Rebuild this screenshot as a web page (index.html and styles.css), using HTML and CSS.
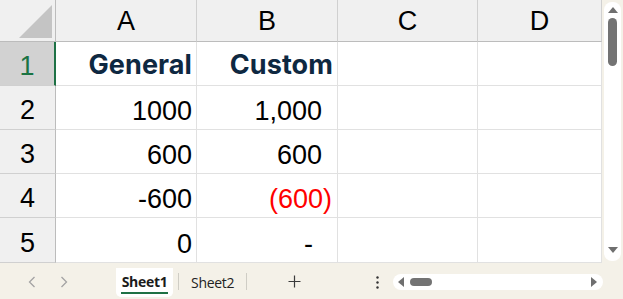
FILE: index.html
```html
<!DOCTYPE html>
<html>
<head>
  <title>Book1</title>
  <meta charset="utf-8"/>
  <link rel="stylesheet" href="styles.css">
</head>
<body>
  <div class="app">
    <div class="main">
      <div class="sheet">
        <div class="corner"><div class="corner-tri"></div></div>
        <div class="colhead">A</div>
        <div class="colhead">B</div>
        <div class="colhead">C</div>
        <div class="colhead">D</div>

        <div class="rowhead active">1</div>
        <div class="cell first title">General</div>
        <div class="cell title">Custom</div>
        <div class="cell"></div>
        <div class="cell"></div>

        <div class="rowhead">2</div>
        <div class="cell first">1000</div>
        <div class="cell"><span class="acc">1,000</span></div>
        <div class="cell"></div>
        <div class="cell"></div>

        <div class="rowhead">3</div>
        <div class="cell first">600</div>
        <div class="cell"><span class="acc">600</span></div>
        <div class="cell"></div>
        <div class="cell"></div>

        <div class="rowhead">4</div>
        <div class="cell first">-600</div>
        <div class="cell"><span class="neg">(600)</span></div>
        <div class="cell"></div>
        <div class="cell"></div>

        <div class="rowhead">5</div>
        <div class="cell first">0</div>
        <div class="cell"><span class="zero">-</span></div>
        <div class="cell"></div>
        <div class="cell"></div>
      </div>

      <div class="vscroll">
        <div class="vtrack">
          <div class="tri-up"></div>
          <div class="vthumb"></div>
          <div class="vspace"></div>
          <div class="tri-down"></div>
        </div>
      </div>
    </div>

    <div class="tabbar">
      <div class="nav">
        <svg width="8" height="12" viewBox="0 0 8 12"><path d="M6.5 1 L1.5 6 L6.5 11" fill="none" stroke="#a3a3a3" stroke-width="1.3"/></svg>
      </div>
      <div class="nav">
        <svg width="8" height="12" viewBox="0 0 8 12"><path d="M1.5 1 L6.5 6 L1.5 11" fill="none" stroke="#a3a3a3" stroke-width="1.3"/></svg>
      </div>
      <div class="tab active"><span>Sheet1</span></div>
      <div class="sep"></div>
      <div class="tab">Sheet2</div>
      <div class="sep"></div>
      <div class="add">
        <svg width="13" height="13" viewBox="0 0 13 13"><path d="M6.5 0.5 V12.5 M0.5 6.5 H12.5" stroke="#3b3b3b" stroke-width="1.2"/></svg>
      </div>
      <div class="more">
        <svg width="3" height="13" viewBox="0 0 3 13"><circle cx="1.5" cy="1.5" r="1.2" fill="#333"/><circle cx="1.5" cy="6.5" r="1.2" fill="#333"/><circle cx="1.5" cy="11.5" r="1.2" fill="#333"/></svg>
      </div>
      <div class="htrack">
        <div class="tri-left"></div>
        <div class="hthumb"></div>
        <div class="hspace"></div>
        <div class="tri-right"></div>
      </div>
    </div>
  </div>
</body>
</html>
```

FILE: styles.css
```css
body {
	margin: 0;
	background: #fff;
	font-family: "Liberation Sans", Arial, sans-serif;
}
.app {
	width: 623px;
	height: 299px;
	display: flex;
	flex-direction: column;
	overflow: hidden;
}
.main {
	height: 263px;
	display: flex;
}

/* grid */
.sheet {
	width: 602px;
	display: grid;
	grid-template-columns: 56px 141px 141px 140px 124px;
	grid-template-rows: 42px 44px 44px 44px 44px 45px;
	overflow: hidden;
}
.sheet > div {
	box-sizing: border-box;
}
.corner {
	background: #f0f0f0;
	border-right: 1px solid #bcbcbc;
	border-bottom: 1px solid #bcbcbc;
	display: flex;
	align-items: flex-end;
	justify-content: flex-end;
	padding: 0 3px 3px 0;
}
.corner-tri {
	width: 0;
	height: 0;
	border-left: 33px solid transparent;
	border-bottom: 33px solid #c4c4c4;
}
.colhead {
	background: #f0f0f0;
	border-right: 1px solid #d0d0d0;
	border-bottom: 1px solid #bcbcbc;
	font-size: 27px;
	color: #000;
	display: flex;
	align-items: center;
	justify-content: center;
	padding-top: 1px;
}
.rowhead {
	background: #f0f0f0;
	border-right: 1px solid #bcbcbc;
	border-bottom: 1px solid #d0d0d0;
	font-size: 27px;
	line-height: 27px;
	color: #000;
	display: flex;
	align-items: flex-end;
	justify-content: center;
	padding-bottom: 5px;
}
.rowhead.active {
	background: #d2d2d2;
	color: #1a7343;
	border-right: 2px solid #1e7145;
}
.cell {
	border-right: 1px solid #e1e1e1;
	border-bottom: 1px solid #e1e1e1;
	font-size: 27px;
	line-height: 27px;
	color: #000;
	display: flex;
	align-items: flex-end;
	justify-content: flex-end;
	padding: 0 4px 4px 0;
	white-space: nowrap;
}
.cell.title {
	font-family: Inter, "Liberation Sans", sans-serif;
	font-weight: 700;
	font-size: 27px;
	line-height: 27px;
	color: #0e2841;
	padding-bottom: 7px;
	letter-spacing: 0.1px;
}
.acc {
	padding-right: 11px;
}
.neg {
	color: #ff0000;
	padding-right: 1px;
}
.zero {
	padding-right: 20px;
}

/* vertical scrollbar */
.vscroll {
	width: 21px;
	background: #f4f1e8;
	padding: 2px 2px 2px 2px;
	box-sizing: border-box;
}
.vtrack {
	height: 100%;
	background: #fff;
	border-radius: 8px;
	display: flex;
	flex-direction: column;
	align-items: center;
	padding: 5px 0 8px 0;
	box-sizing: border-box;
}
.tri-up {
	width: 0;
	height: 0;
	border-left: 5px solid transparent;
	border-right: 5px solid transparent;
	border-bottom: 6px solid #6f6f6f;
}
.tri-down {
	width: 0;
	height: 0;
	border-left: 5px solid transparent;
	border-right: 5px solid transparent;
	border-top: 6px solid #6f6f6f;
}
.vthumb {
	margin-top: 5px;
	width: 9px;
	height: 48px;
	background: #737373;
	border-radius: 5px;
}
.vspace {
	flex: 1;
}

/* sheet tabs */
.tabbar {
	flex: 1;
	background: #f4f1e8;
	display: flex;
	align-items: center;
	font-family: "Open Sans", "Liberation Sans", sans-serif;
	font-size: 14px;
	color: #222;
}
.nav {
	width: 32px;
	display: flex;
	justify-content: center;
	padding-top: 2px;
}
.nav:first-child {
	margin-left: 16px;
}
.tab {
	padding: 0 12px;
	height: 36px;
	display: flex;
	align-items: center;
	letter-spacing: -0.3px;
	box-sizing: border-box;
	padding-top: 2px;
}
.tab.active {
	margin-left: 36px;
	width: 57px;
	padding: 0;
	justify-content: center;
	background: #fff;
	border-radius: 0 0 5px 5px;
	align-self: flex-start;
	margin-top: 5px;
	height: 29px;
	font-weight: 700;
	color: #1b1b1b;
}
.tab.active span {
	border-bottom: 2px solid #1e7145;
	padding: 1px 1px 2px 1px;
	line-height: 17px;
}
.sep {
	width: 1px;
	height: 17px;
	background: #cfcdc5;
	margin: 0 0 0 5px;
}
.tab.active + .sep {
	margin-left: 5px;
}
.tab + .sep {
	margin-left: 0;
}
.add {
	width: 40px;
	margin-left: 27px;
	display: flex;
	justify-content: center;
}
.more {
	margin-left: 62px;
	width: 3px;
	display: flex;
	padding-top: 2px;
}
.htrack {
	margin-left: 14px;
	width: 210px;
	height: 16px;
	background: #fff;
	border-radius: 8px;
	display: flex;
	align-items: center;
	padding: 0 6px 0 5px;
	box-sizing: border-box;
	margin-top: 2px;
}
.tri-left {
	width: 0;
	height: 0;
	border-top: 5px solid transparent;
	border-bottom: 5px solid transparent;
	border-right: 6px solid #6f6f6f;
}
.tri-right {
	width: 0;
	height: 0;
	border-top: 5px solid transparent;
	border-bottom: 5px solid transparent;
	border-left: 6px solid #6f6f6f;
}
.hthumb {
	margin-left: 6px;
	width: 22px;
	height: 8px;
	background: #737373;
	border-radius: 4px;
}
.hspace {
	flex: 1;
}
```
